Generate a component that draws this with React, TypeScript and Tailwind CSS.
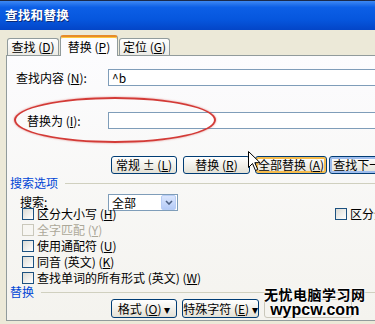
import type { ReactNode } from "react";

function U({ children }: { children: ReactNode }) {
  return <span className="underline underline-offset-1">{children}</span>;
}

function Checkbox({ children, disabled }: { children: ReactNode; disabled?: boolean }) {
  return (
    <div className="flex items-center gap-[3px] shrink-0">
      <div
        className={
          disabled
            ? "w-[12px] h-[12px] border border-[#cac8bb] bg-[#f7f6f2]"
            : "w-[12px] h-[12px] border border-[#1c5180] bg-gradient-to-br from-[#dcdbd5] to-white"
        }
      />
      <span className={disabled ? "text-[#aca899] whitespace-nowrap" : "whitespace-nowrap"}>{children}</span>
    </div>
  );
}

function Cursor() {
  return (
    <svg width="13" height="21" viewBox="0 0 13 21" className="absolute left-[248px] top-[151px]">
      <path d="M0.5 0.5 L0.5 16.5 L4.5 12.5 L7.5 19.5 L9.8 18.5 L6.8 11.7 L12 11.7 Z" fill="white" stroke="black" strokeWidth="1" />
    </svg>
  );
}

const btn =
  "shrink-0 rounded-[3px] border border-[#003c74] bg-gradient-to-b from-white to-[#e3e1d6] flex items-center justify-center whitespace-nowrap";

export default function App() {
  return (
    <div className="relative w-[375px] h-[324px] overflow-hidden bg-[#ece9d8] text-[12px] text-black font-['Noto_Sans_CJK_SC',sans-serif]">
      {/* title bar */}
      <div className="h-[30px] border-t border-[#1b2a4a] bg-[linear-gradient(180deg,#3d88f4_0%,#0c5fe6_22%,#0656dd_65%,#0345c7_100%)] flex items-center px-[5px]">
        <span className="text-white font-bold text-[12.5px] tracking-[0.3px] [text-shadow:1px_1px_0_#0a2a78]">查找和替换</span>
      </div>

      {/* tabs */}
      <div className="h-[25px] flex items-end pl-[7px]">
        <div className="w-[52px] h-[17px] border border-b-0 border-[#919b9c] rounded-t-[3px] bg-gradient-to-b from-white to-[#ecebe6] flex items-center justify-center whitespace-nowrap">
          查找 (<U>D</U>)
        </div>
        <div className="relative z-10 ml-[1px] mb-[-1px] w-[58px] h-[21px] border border-b-0 border-[#919b9c] border-t-2 border-t-[#e68b2c] rounded-t-[3px] bg-[#fcfcfe] shadow-[inset_0_1px_0_#ffc73c] flex items-center justify-center whitespace-nowrap">
          替换 (<U>P</U>)
        </div>
        <div className="ml-[1px] w-[51px] h-[17px] border border-b-0 border-[#919b9c] rounded-t-[3px] bg-gradient-to-b from-white to-[#ecebe6] flex items-center justify-center whitespace-nowrap">
          定位 (<U>G</U>)
        </div>
      </div>

      {/* panel */}
      <div className="ml-[6px] w-[430px] h-[266px] border border-r-0 border-[#919b9c] bg-gradient-to-b from-[#fcfcfe] to-[#f4f3ee] flex flex-col">
        <div className="mt-[13px] h-[17px] flex items-center pl-[9px]">
          <span className="w-[92px] shrink-0 whitespace-nowrap">查找内容 (<U>N</U>):</span>
          <div className="w-[290px] shrink-0 h-[17px] border border-[#7f9db9] bg-white flex items-center pl-[3px]">^b</div>
        </div>

        <div className="mt-[26px] h-[17px] flex items-center pl-[20px]">
          <span className="w-[81px] shrink-0 whitespace-nowrap">替换为 (<U>I</U>):</span>
          <div className="w-[290px] shrink-0 h-[17px] border border-[#7f9db9] bg-white" />
        </div>

        <div className="mt-[27px] h-[18px] flex pl-[104px]">
          <div className={`${btn} w-[66px]`}>
            常规 ± (<U>L</U>)
          </div>
          <div className={`${btn} ml-[6px] w-[67px]`}>
            替换 (<U>R</U>)
          </div>
          <div className={`${btn} ml-[5px] w-[72px] shadow-[inset_0_0_0_2px_#f6bc4d]`}>
            全部替换 (<U>A</U>)
          </div>
          <div className={`${btn} ml-[2px] w-[86px] shadow-[inset_0_0_0_2px_#9fbdee]`}>
            查找下一处 (<U>F</U>)
          </div>
        </div>

        <div className="mt-[2px] h-[14px] flex items-center pl-[3px]">
          <span className="text-[#0046d5] whitespace-nowrap">搜索选项</span>
          <div className="ml-[7px] flex-1 h-px bg-[#d0d0bf]" />
        </div>

        <div className="mt-[4px] h-[12px] flex items-start pl-[13px]">
          <span className="w-[88px] shrink-0 mt-[1px] h-[14px] leading-[14px] whitespace-nowrap">
            搜索<U>:</U>
          </span>
          <div className="w-[70px] shrink-0 h-[17px] border border-[#7f9db9] bg-white flex items-center">
            <span className="flex-1 pl-[3px]">全部</span>
            <div className="w-[15px] h-[15px] mr-px rounded-[2px] bg-gradient-to-b from-[#dbe6fd] to-[#b5cbf7] border border-[#b8cdf5] flex items-center justify-center">
              <svg width="8" height="5" viewBox="0 0 8 5">
                <path d="M1 1 L4 4 L7 1" fill="none" stroke="#4d6185" strokeWidth="1.6" />
              </svg>
            </div>
          </div>
        </div>

        <div className="flex flex-col pl-[15px]">
          <div className="h-[16px] flex items-center">
            <div className="w-[313px] shrink-0">
              <Checkbox>区分大小写 (<U>H</U>)</Checkbox>
            </div>
            <Checkbox>区分全/半角 (<U>M</U>)</Checkbox>
          </div>
          <div className="h-[16px] flex items-center">
            <Checkbox disabled>全字匹配 (<U>Y</U>)</Checkbox>
          </div>
          <div className="h-[16px] flex items-center">
            <Checkbox>使用通配符 (<U>U</U>)</Checkbox>
          </div>
          <div className="h-[16px] flex items-center">
            <Checkbox>同音 (英文) (<U>K</U>)</Checkbox>
          </div>
          <div className="h-[16px] flex items-center">
            <Checkbox>查找单词的所有形式 (英文) (<U>W</U>)</Checkbox>
          </div>
        </div>

        <div className="h-[12px] flex items-center pl-[3px]">
          <span className="text-[#0046d5] whitespace-nowrap">替换</span>
          <div className="ml-[7px] flex-1 h-px bg-[#d0d0bf]" />
        </div>

        <div className="mt-[1px] h-[19px] flex pl-[104px] gap-[5px]">
          <div className={`${btn} w-[66px]`}>
            格式 (<U>O</U>) ▾
          </div>
          <div className={`${btn} w-[77px]`}>
            特殊字符 (<U>E</U>) ▾
          </div>
          <div className="shrink-0 w-[88px] rounded-[3px] border border-[#c9c7ba] bg-[#f5f4ef]" />
        </div>
      </div>

      {/* annotation ellipse */}
      <div className="absolute left-[14px] top-[97px] w-[202px] h-[46px] rounded-[50%] border-2 border-[#d33b37] shadow-[0_0_2px_rgba(211,59,55,0.6)]" />

      <Cursor />

      {/* watermark */}
      <div className="absolute left-[264px] top-[286px] flex flex-col items-center font-bold text-black [text-shadow:0_0_2px_#fff,0_0_2px_#fff,0_0_3px_#fff]">
        <span className="text-[14px] leading-[17px] tracking-[0.5px]">无忧电脑学习网</span>
        <span className="text-[16px] leading-[13px] font-['Liberation_Sans',sans-serif]">wypcw.com</span>
      </div>
    </div>
  );
}
